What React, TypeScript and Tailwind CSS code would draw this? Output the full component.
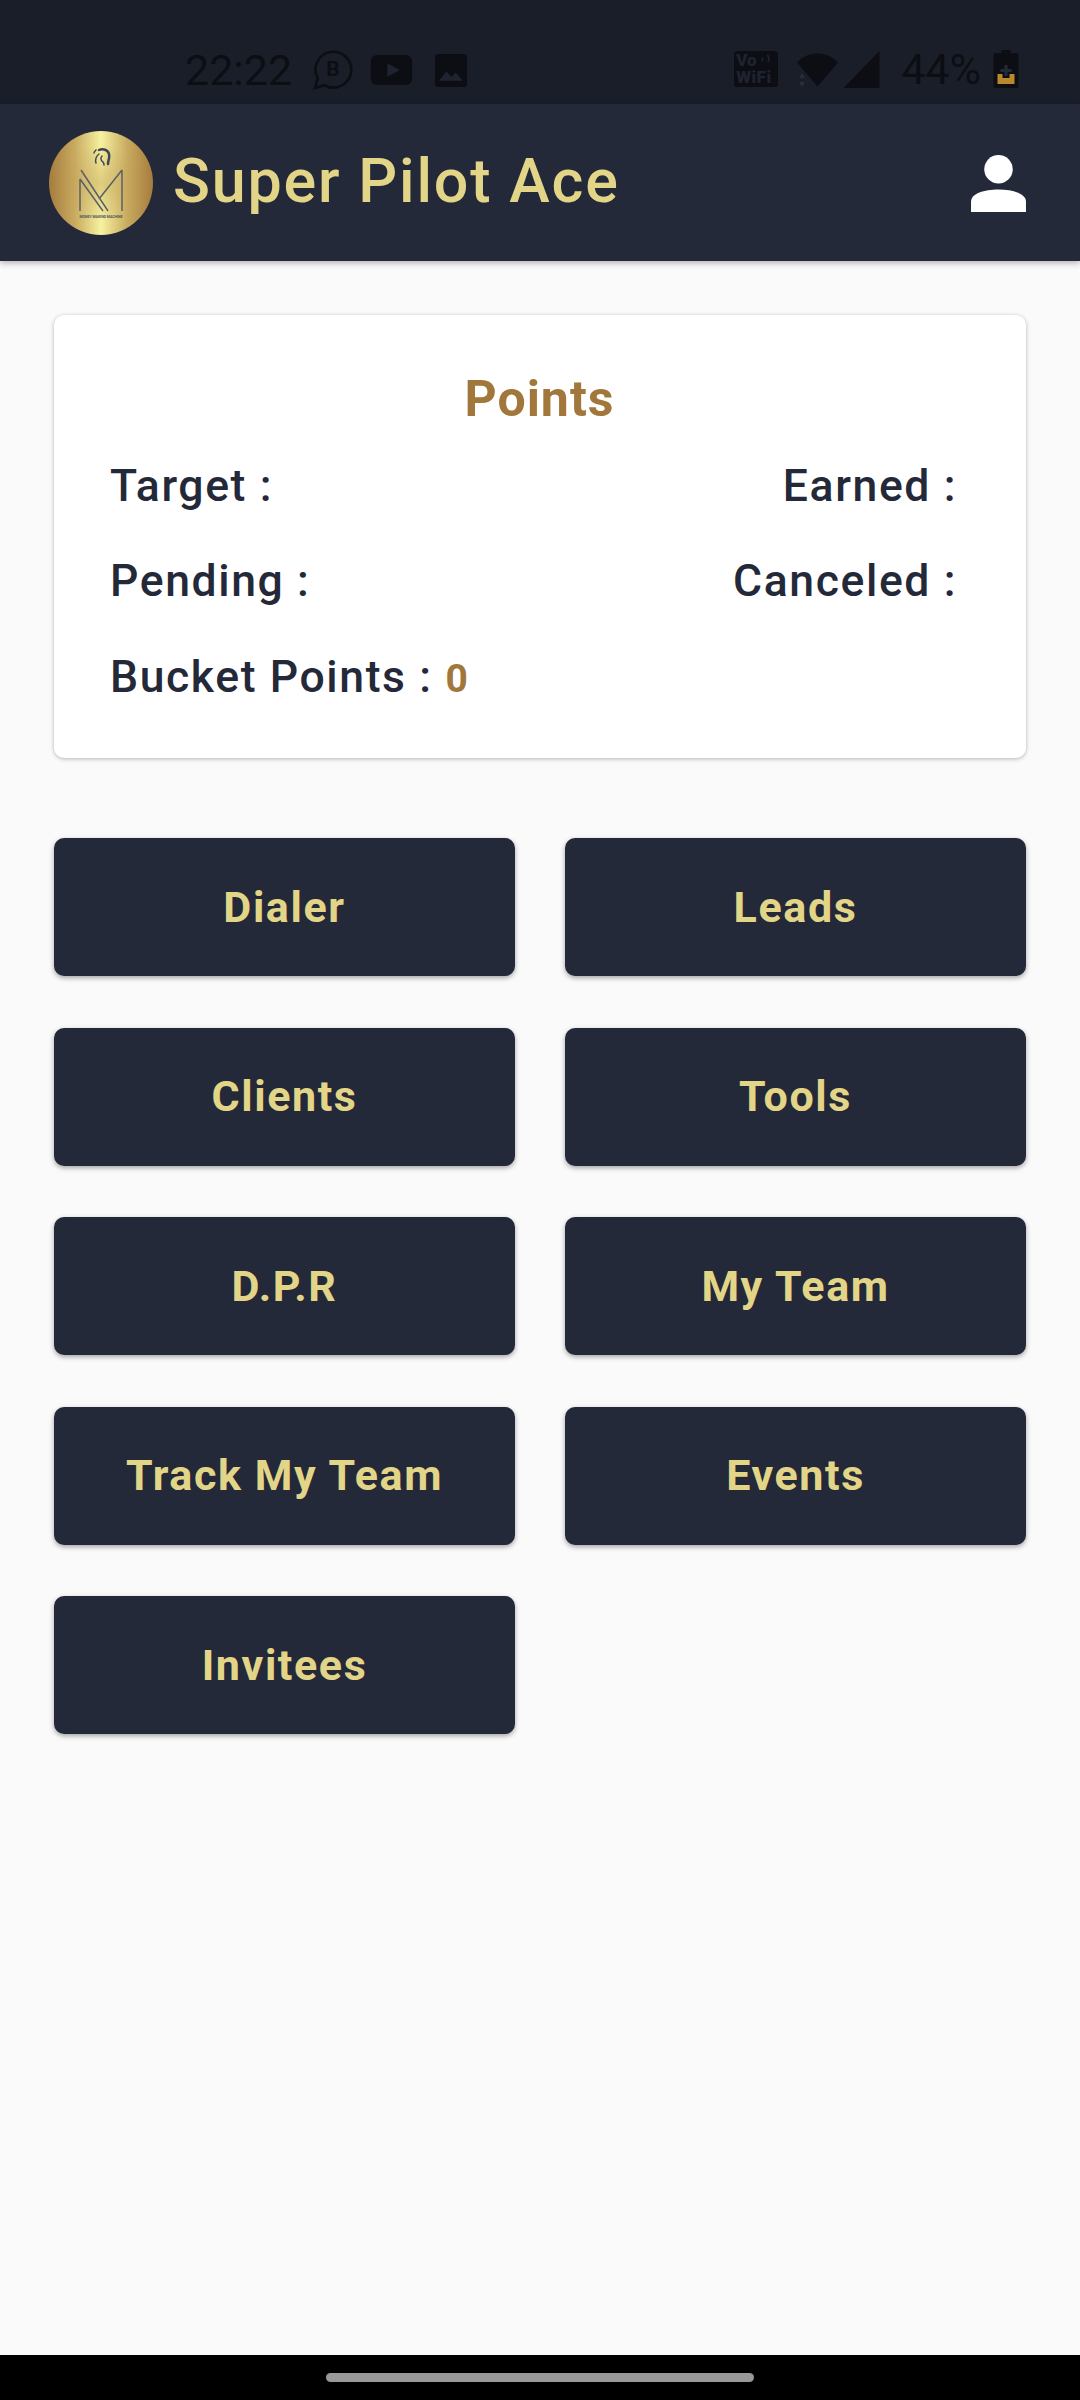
const buttons = ['Dialer', 'Leads', 'Clients', 'Tools', 'D.P.R', 'My Team', 'Track My Team', 'Events', 'Invitees'];

const Logo = () => (
  <svg viewBox="0 0 104 104" className="h-[104px] w-[104px] shrink-0">
    <defs>
      <linearGradient id="gold" x1="0" x2="1" y1="0" y2="0">
        <stop offset="0" stopColor="#a57c3e" />
        <stop offset="0.25" stopColor="#c9ab60" />
        <stop offset="0.5" stopColor="#f7f2a0" />
        <stop offset="0.75" stopColor="#c9ab60" />
        <stop offset="1" stopColor="#a57c3e" />
      </linearGradient>
      <radialGradient id="shade">
        <stop offset="0" stopColor="#b8934c" stopOpacity="0.4" />
        <stop offset="0.75" stopColor="#b8934c" stopOpacity="0" />
      </radialGradient>
    </defs>
    <circle cx="52" cy="52" r="52" fill="url(#gold)" />
    <circle cx="52" cy="52" r="52" fill="url(#shade)" />
    <g fill="none" stroke="#3f4656" strokeLinecap="round">
      <path d="M50 19c4-2 9 0 10 4 1 4-1 6-1 10" strokeWidth="2.500" />
      <path d="M50 23c-3 2-4 6-3 9M53 25c-2 2-1 5 1 6 1 1 1 2 1 3" strokeWidth="1.500" />
      <path d="M47 19c-1 1-2 2-2 3" strokeWidth="1.500" />
    </g>
    <g fill="none" stroke="#5a6068" strokeWidth="1.500">
      <path d="M31 48v32M73 39v41M32 39l27 41M31 48l23 32M73 39L50 68" />
    </g>
    <text x="52" y="87" textAnchor="middle" fontSize="3.500" fontWeight="700" fill="#4d5258" fontFamily="Roboto, sans-serif">MONEY MAKING MACHINE</text>
  </svg>
);

const StatusBar = () => (
  <div className="flex h-[104px] shrink-0 items-start justify-between bg-[#1a1e29] pl-[185px] pr-[61px] pt-[50px] text-[#0c0e13]">
    <div className="flex items-center">
      <span className="text-[43px] leading-[38px]">22:22</span>
      <svg viewBox="0 0 38 38" className="ml-[21px] h-[40px] w-[40px]" fill="none" stroke="currentColor" strokeWidth="2.500">
        <path d="M2 36l2.500-9A17 17 0 1 1 11 33.500z" />
        <text x="19" y="25" textAnchor="middle" fontSize="20" fontWeight="700" fill="currentColor" stroke="none" fontFamily="Roboto, sans-serif">B</text>
      </svg>
      <svg viewBox="0 0 40 30" className="ml-[17px] h-[31px] w-[43px]">
        <rect width="40" height="29" rx="6" fill="currentColor" />
        <path d="M16 8l12 6.500-12 6.500z" fill="#1f2330" />
      </svg>
      <svg viewBox="0 0 31 32" className="ml-[22px] h-[33px] w-[32px]">
        <rect width="31" height="32" rx="3" fill="currentColor" />
        <path d="M4 26l7-9 5 5 4-4 7 8z" fill="#1f2330" />
      </svg>
    </div>
    <div className="flex items-center">
      <div className="flex h-[36px] w-[44px] flex-col justify-center rounded-[3px] bg-[#0c0e13] pl-[2px]">
        <span className="flex items-start text-[17px] font-black leading-[17px] text-[#1f2330]">
          Vo
          <svg viewBox="0 0 12 10" className="ml-[3px] mt-[2px] h-[9px] w-[11px]" fill="none" stroke="currentColor" strokeWidth="2">
            <path d="M2 4c1 1 1 2 0 4M8 1c2 2 2 5 1 8" />
          </svg>
        </span>
        <span className="text-[17px] font-black leading-[17px] tracking-[0.500px] text-[#1f2330]">WiFi</span>
      </div>
      <div className="relative ml-[19px]">
        <svg viewBox="0 0 41 34" className="h-[35px] w-[41px]">
          <path d="M0 10C11-2 30-2 41 10L20.500 34z" fill="currentColor" />
        </svg>
        <svg viewBox="0 0 8 14" className="absolute bottom-0 left-[1px] h-[14px] w-[8px]" fill="#2a2e39">
          <path d="M4 0l3 5H1zM4 14l3-5H1z" />
        </svg>
      </div>
      <svg viewBox="0 0 36 37" className="ml-[5px] h-[37px] w-[37px]">
        <path d="M36 0v37H0z" fill="currentColor" />
      </svg>
      <span className="ml-[21px] text-[43px] leading-[38px]">44%</span>
      <svg viewBox="0 0 25 38" className="ml-[12px] h-[38px] w-[26px]">
        <path d="M8 0h9v3h6a2 2 0 0 1 2 2v31a2 2 0 0 1-2 2H2a2 2 0 0 1-2-2V5a2 2 0 0 1 2-2h6z" fill="currentColor" />
        <path d="M4 24h5v4h7v-4h5v10H4z" fill="#b8892b" />
        <path d="M11 15h3v4h4v3h-4v4h-3v-4H7v-3h4z" fill="#252a36" />
      </svg>
    </div>
  </div>
);

export default function App() {
  return (
    <div className="flex h-[2400px] flex-col bg-[#fafafa] font-['Roboto',sans-serif]">
      <StatusBar />
      <header className="z-10 flex h-[157px] shrink-0 items-center justify-between bg-[#242939] pl-[49px] pr-[52px] shadow-[0_2px_6px_rgba(0,0,0,0.3)]">
        <div className="flex items-center gap-[20px]">
          <Logo />
          <h1 className="-mt-[2px] text-[61px] font-medium leading-none tracking-[1.800px] text-[#e3d587]">Super Pilot Ace</h1>
        </div>
        <svg viewBox="0 0 54 57" className="h-[58px] w-[59px]" fill="#fff">
          <circle cx="27" cy="15" r="14" />
          <path d="M0 57V47c0-8 13-12 27-12s27 4 27 12v10z" />
        </svg>
      </header>

      <main className="flex flex-1 flex-col px-[54px] pt-[54px]">
        <section className="h-[443px] rounded-[10px] bg-white pl-[56px] pr-[57px] pt-[56px] shadow-[0_1px_4px_rgba(0,0,0,0.28)]">
          <h2 className="text-center text-[50px] font-bold leading-[56px] tracking-[1px] text-[#a1773b]">Points</h2>
          <div className="mt-[34px] flex justify-between pr-[12px] text-[44.500px] font-medium leading-[50px] tracking-[1.600px] text-[#242939]">
            <span>Target :</span>
            <span>Earned :</span>
          </div>
          <div className="mt-[45px] flex justify-between pr-[12px] text-[44.500px] font-medium leading-[50px] tracking-[1.600px] text-[#242939]">
            <span>Pending :</span>
            <span>Canceled :</span>
          </div>
          <div className="mt-[46px] flex items-baseline gap-[13px] text-[44.500px] font-medium leading-[50px] tracking-[1.600px] text-[#242939]">
            <span>Bucket Points :</span>
            <span className="text-[39px] font-bold text-[#a1773b]">0</span>
          </div>
        </section>

        <div className="mt-[80px] grid grid-cols-2 gap-x-[50px] gap-y-[51.500px]">
          {buttons.map((label) => (
            <button
              key={label}
              className="flex h-[138px] items-center justify-center rounded-[10px] bg-[#242939] text-[43px] font-bold tracking-[1.600px] text-[#e3d587] shadow-[0_2px_5px_rgba(0,0,0,0.35)]"
            >
              {label}
            </button>
          ))}
        </div>
      </main>

      <div className="flex h-[45px] shrink-0 items-start justify-center bg-black pt-[18px]">
        <div className="h-[9px] w-[428px] rounded-full bg-[#999999]" />
      </div>
    </div>
  );
}
